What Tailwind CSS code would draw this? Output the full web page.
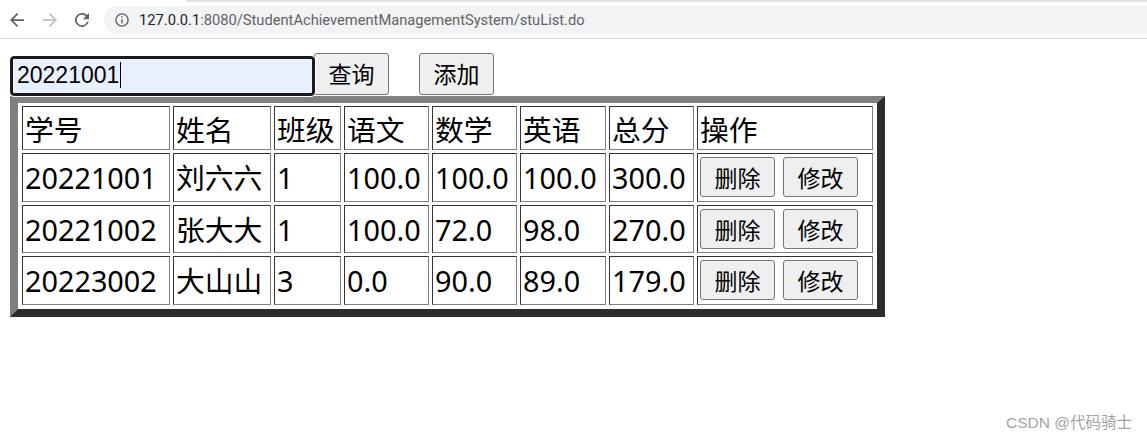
<!DOCTYPE html>
<html lang="zh">
  <head>
    <meta charset="UTF-8" />
    <title>stuList</title>
    <script src="https://cdn.jsdelivr.net/npm/@tailwindcss/browser@4"></script>
  </head>
  <body class="relative h-[440px] w-[1147px] overflow-hidden bg-white font-['Noto_Sans','Noto_Sans_CJK_SC',sans-serif] text-black">
    <!-- tab strip edge -->
    <div class="ml-[186px] h-[2px] rounded-bl-[2px] bg-[#dee1e6]"></div>

    <!-- browser toolbar -->
    <div class="flex h-[37px] items-center border-b border-[#dadce0] pl-[10px]">
      <svg class="h-[14px] w-[14px]" viewBox="0 0 16 16" fill="#5f6368"><path d="M16 7H3.8l5.6-5.6L8 0 0 8l8 8 1.4-1.4L3.8 9H16z"/></svg>
      <svg class="ml-[19px] h-[14px] w-[14px]" viewBox="0 0 16 16" fill="#bdc1c6"><path d="M0 7h12.2L6.6 1.4 8 0l8 8-8 8-1.4-1.4L12.2 9H0z"/></svg>
      <svg class="ml-[18px] h-[14px] w-[14px]" viewBox="0 0 16 16" fill="#5f6368"><path d="M13.65 2.35A8 8 0 1 0 15.73 10h-2.08a6 6 0 1 1-1.41-6.24L9 7h7V0z"/></svg>
      <div class="ml-[15px] flex h-[28px] flex-1 items-center rounded-l-full bg-[#f1f3f4] pl-[11px] font-['Roboto','Noto_Sans',sans-serif] text-[14.7px] text-[#5f6368]">
        <svg class="h-[14px] w-[14px]" viewBox="0 0 16 16" fill="none" stroke="#5f6368" stroke-width="1.6"><circle cx="8" cy="8" r="7"/><path d="M8 7v5M8 3.6v1.8"/></svg>
        <span class="ml-[10px]"><span class="text-[#202124]">127.0.0.1</span>:8080/StudentAchievementManagementSystem/stuList.do</span>
      </div>
    </div>

    <!-- search row -->
    <div class="flex h-[57px] items-start pl-[10px] pt-[14px]">
      <div class="relative mt-[3px]">
        <input
          value="20221001"
          class="block h-[40px] w-[305px] rounded-[4px] border-[3px] border-[#1a1a1a] bg-[#e8f0fe] px-[4px] pb-[2px] font-['Liberation_Sans',sans-serif] text-[23px] outline-1 outline-white" />
        <span class="absolute left-[110px] top-[6px] h-[26px] w-px bg-black"></span>
      </div>
      <button class="-ml-px h-[42px] w-[75px] rounded-[3px] border border-[#767676] bg-[#efefef] text-[23px]">查询</button>
      <button class="ml-[30px] h-[42px] w-[75px] rounded-[3px] border border-[#767676] bg-[#efefef] text-[23px]">添加</button>
    </div>

    <!-- student table -->
    <table class="ml-[10px] w-[875px] table-fixed border-separate border-spacing-[3px] border-t-[7px] border-r-[8px] border-b-[8px] border-l-[8px] border-t-[#808080] border-r-[#2d2d2d] border-b-[#2d2d2d] border-l-[#808080] px-px pb-px text-[28.8px] leading-none [&_td]:border [&_td]:border-t-[#333] [&_td]:border-r-[#808080] [&_td]:border-b-[#808080] [&_td]:border-l-[#333] [&_td]:p-[2px]">
      <colgroup>
        <col class="w-[148px]" /><col class="w-[98px]" /><col class="w-[67px]" /><col class="w-[85px]" /><col class="w-[85px]" /><col class="w-[86px]" /><col class="w-[85px]" /><col class="w-[176px]" />
      </colgroup>
      <tbody>
        <tr class="h-[44px] [&>td]:pt-[6px]">
          <td>学号</td><td>姓名</td><td>班级</td><td>语文</td><td>数学</td><td>英语</td><td>总分</td><td>操作</td>
        </tr>
        <tr class="h-[49px] [&>td]:pt-[4px]">
          <td>20221001</td><td>刘六六</td><td>1</td><td>100.0</td><td>100.0</td><td>100.0</td><td>300.0</td>
          <td class="align-top">
            <div class="-mt-px flex gap-[8px]">
              <button class="h-[40px] w-[75px] rounded-[3px] border border-[#767676] bg-[#efefef] pt-[2px] text-[23px]">删除</button>
              <button class="h-[40px] w-[75px] rounded-[3px] border border-[#767676] bg-[#efefef] pt-[2px] text-[23px]">修改</button>
            </div>
          </td>
        </tr>
        <tr class="h-[48px] [&>td]:pt-[4px]">
          <td>20221002</td><td>张大大</td><td>1</td><td>100.0</td><td>72.0</td><td>98.0</td><td>270.0</td>
          <td class="align-top">
            <div class="-mt-px flex gap-[8px]">
              <button class="h-[40px] w-[75px] rounded-[3px] border border-[#767676] bg-[#efefef] pt-[2px] text-[23px]">删除</button>
              <button class="h-[40px] w-[75px] rounded-[3px] border border-[#767676] bg-[#efefef] pt-[2px] text-[23px]">修改</button>
            </div>
          </td>
        </tr>
        <tr class="h-[49px] [&>td]:pt-[4px]">
          <td>20223002</td><td>大山山</td><td>3</td><td>0.0</td><td>90.0</td><td>89.0</td><td>179.0</td>
          <td class="align-top">
            <div class="-mt-px flex gap-[8px]">
              <button class="h-[40px] w-[75px] rounded-[3px] border border-[#767676] bg-[#efefef] pt-[2px] text-[23px]">删除</button>
              <button class="h-[40px] w-[75px] rounded-[3px] border border-[#767676] bg-[#efefef] pt-[2px] text-[23px]">修改</button>
            </div>
          </td>
        </tr>
      </tbody>
    </table>

    <!-- watermark -->
    <span class="absolute left-[1006px] top-[411px] font-['Liberation_Sans','Noto_Sans_CJK_SC',sans-serif] text-[15.5px] text-[#a3a3a3]">CSDN @代码骑士</span>
  </body>
</html>
